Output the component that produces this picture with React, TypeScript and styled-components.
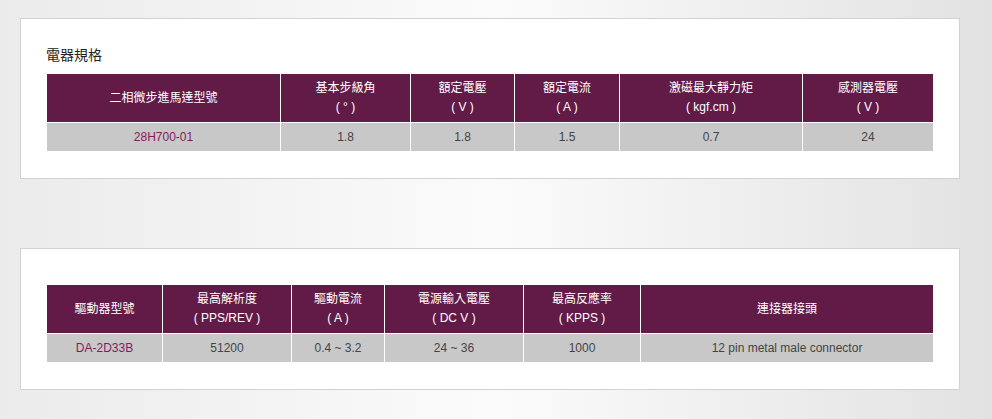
import React from "react";
import styled, { createGlobalStyle } from "styled-components";

const GlobalStyle = createGlobalStyle`
  html, body {
    margin: 0;
    padding: 0;
  }
  body {
    font-family: "Liberation Sans", Arial, "Noto Sans CJK TC", sans-serif;
    background: linear-gradient(to right, #ebebeb 0%, #fbfbfb 50%, #e2e2e2 100%);
    min-height: 419px;
  }
`;

const Page = styled.div`
  padding: 18px 0 30px 20px;
  width: 940px;
`;

const Panel = styled.section<{ $top: number }>`
  box-sizing: border-box;
  width: 940px;
  background: #fff;
  border: 1px solid #d2d2d2;
  padding: ${(p) => p.$top}px 25px 26px 25px;
  & + & {
    margin-top: 69px;
  }
`;

const Title = styled.h3`
  margin: 0 0 9px 0;
  height: 20px;
  font-family: "Noto Sans CJK TC", sans-serif;
  font-size: 14px;
  line-height: 20px;
  font-weight: normal;
  color: #222;
`;

const Table = styled.table`
  width: 887px;
  border-collapse: collapse;
  table-layout: fixed;
  font-size: 12px;
`;

const HeadCell = styled.th`
  background: #621a47;
  color: #fff;
  font-weight: normal;
  text-align: center;
  vertical-align: middle;
  border: 1px solid #fff;
  padding: 5px 4px;
  line-height: 19px;
`;

const Line = styled.span`
  display: block;
  height: 19px;
  overflow: hidden;
`;

const Cell = styled.td<{ $accent?: boolean }>`
  background: #c8c8c8;
  color: ${(p) => (p.$accent ? "#7f1d5e" : "#444")};
  text-align: center;
  border: 1px solid #fff;
  padding: 5px 4px;
  line-height: 18px;
`;

type Col = { title: string; unit?: string; width: number };

const motorCols: Col[] = [
  { title: "二相微步進馬達型號", width: 234 },
  { title: "基本步級角", unit: "( ° )", width: 130 },
  { title: "額定電壓", unit: "( V )", width: 104 },
  { title: "額定電流", unit: "( A )", width: 105 },
  { title: "激磁最大靜力矩", unit: "( kgf.cm )", width: 183 },
  { title: "感測器電壓", unit: "( V )", width: 131 },
];
const motorRow = ["28H700-01", "1.8", "1.8", "1.5", "0.7", "24"];

const driverCols: Col[] = [
  { title: "驅動器型號", width: 116 },
  { title: "最高解析度", unit: "( PPS/REV )", width: 129 },
  { title: "驅動電流", unit: "( A )", width: 93 },
  { title: "電源輸入電壓", unit: "( DC V )", width: 139 },
  { title: "最高反應率", unit: "( KPPS )", width: 117 },
  { title: "連接器接頭", width: 293 },
];
const driverRow = ["DA-2D33B", "51200", "0.4 ~ 3.2", "24 ~ 36", "1000", "12 pin metal male connector"];

const SpecTable = ({ cols, row }: { cols: Col[]; row: string[] }) => (
  <Table>
    <colgroup>
      {cols.map((c, i) => (
        <col key={i} style={{ width: c.width }} />
      ))}
    </colgroup>
    <thead>
      <tr>
        {cols.map((c, i) => (
          <HeadCell key={i}>
            <Line>{c.title}</Line>
            {c.unit ? <Line>{c.unit}</Line> : null}
          </HeadCell>
        ))}
      </tr>
    </thead>
    <tbody>
      <tr>
        {row.map((v, i) => (
          <Cell key={i} $accent={i === 0}>
            {v}
          </Cell>
        ))}
      </tr>
    </tbody>
  </Table>
);

export default function App() {
  return (
    <>
      <GlobalStyle />
      <Page>
        <Panel $top={25}>
          <Title>電器規格</Title>
          <SpecTable cols={motorCols} row={motorRow} />
        </Panel>
        <Panel $top={35}>
          <SpecTable cols={driverCols} row={driverRow} />
        </Panel>
      </Page>
    </>
  );
}
